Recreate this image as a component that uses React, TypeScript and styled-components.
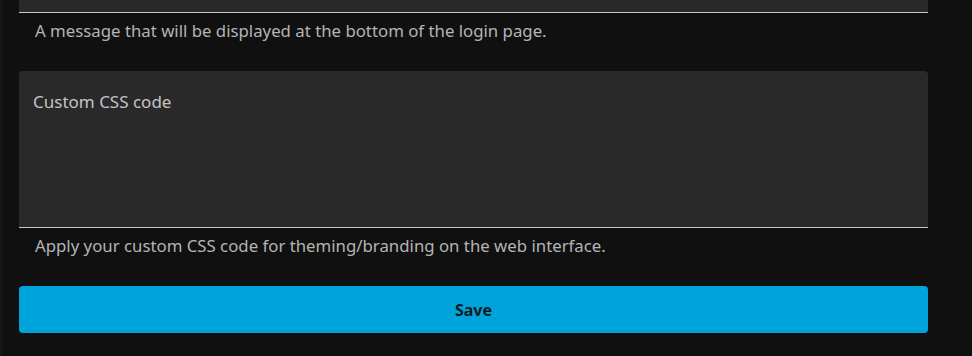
import React from "react";
import styled, { createGlobalStyle } from "styled-components";

const Global = createGlobalStyle`
  html, body {
    margin: 0;
    padding: 0;
    background: #101010;
  }
  body {
    font-family: "Noto Sans", "Liberation Sans", sans-serif;
    color: #d0d0d0;
  }
`;

const Page = styled.div`
  display: flex;
  flex-direction: column;
  padding: 0 44px 0 19px;
  border-left: 2px solid #161616;
  min-height: 356px;
  box-sizing: border-box;
`;

const FieldTail = styled.div`
  height: 12px;
  background: #292929;
  border-bottom: 1px solid #c8c8c8;
  margin-left: -2px;
`;

const TextArea = styled.div`
  box-sizing: border-box;
  height: 157px;
  background: #292929;
  border-bottom: 1px solid #c8c8c8;
  border-radius: 4px 4px 0 0;
  padding: 21px 14px 0 14px;
  margin-top: 30px;
  margin-left: -2px;
  font-size: 17px;
  line-height: 20px;
  color: #c4c4c4;
`;

const Description = styled.div`
  margin-top: 8px;
  padding-left: 14px;
  font-size: 16.8px;
  line-height: 20px;
  color: #b4b4b4;
  white-space: nowrap;
`;

const SaveButton = styled.button`
  margin-top: 30px;
  margin-left: -2px;
  height: 47px;
  border: none;
  border-radius: 4px;
  background: #00a4dc;
  color: #0c1a22;
  font-family: "Noto Sans", "Liberation Sans", sans-serif;
  font-weight: 700;
  font-size: 16px;
  cursor: pointer;
`;

export default function App() {
  return (
    <>
      <Global />
      <Page>
        <FieldTail />
        <Description>
          A message that will be displayed at the bottom of the login page.
        </Description>
        <TextArea>Custom CSS code</TextArea>
        <Description>
          Apply your custom CSS code for theming/branding on the web interface.
        </Description>
        <SaveButton type="button">Save</SaveButton>
      </Page>
    </>
  );
}
